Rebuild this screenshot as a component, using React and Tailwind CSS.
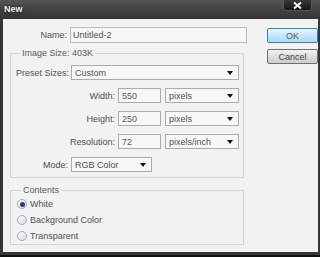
import React from "react";

const font = { fontFamily: '"Liberation Sans", Arial, sans-serif' };

function Arrow() {
  return (
    <svg width="6" height="4" viewBox="0 0 6 4" className="shrink-0">
      <path d="M0 0 H6 L3 4 Z" fill="#111" />
    </svg>
  );
}

function Select({ w, children }) {
  return (
    <div
      className={`${w} h-[15px] border border-[#ababab] bg-[#f7f7f7] flex items-center justify-between pl-[3px] pr-[5px] text-[#505050]`}
    >
      <span>{children}</span>
      <Arrow />
    </div>
  );
}

function Input({ w, children }) {
  return (
    <div
      className={`${w} h-[15px] border border-[#ababab] bg-[#f7f7f7] flex items-center pl-[3px] text-[#5a5a5a]`}
    >
      {children}
    </div>
  );
}

function Radio({ checked, label }) {
  return (
    <div className="h-[16px] flex items-center pl-[6px] gap-[2px] text-[#505050]">
      <div className="w-[10px] h-[10px] rounded-full border border-[#a3abb5] bg-gradient-to-br from-[#ffffff] to-[#d3dae2] flex items-center justify-center">
        {checked && <div className="w-[5px] h-[5px] rounded-full bg-[#2b3e74]" />}
      </div>
      <span className="ml-[1px]">{label}</span>
    </div>
  );
}

function UnitRow({ label, value, unit }) {
  return (
    <div className="flex items-center h-[15px]">
      <div className="w-[104px] text-right text-[#505050]">{label}</div>
      <div className="w-[3px]" />
      <Input w="w-[43px]">{value}</Input>
      <div className="w-[4px]" />
      <Select w="w-[74px]">{unit}</Select>
    </div>
  );
}

export default function App() {
  return (
    <div
      className="w-[320px] h-[257px] bg-[#0f1512] flex flex-col overflow-hidden text-[9px] leading-[12px]"
      style={font}
    >
      <div className="h-[19px] bg-gradient-to-b from-[#555555] via-[#424242] to-[#363636] flex items-start">
        <span className="ml-[4px] mt-[4px] font-bold text-[#f2f2f2] text-[9px] leading-[11px] [text-shadow:0_0_3px_#000]">
          New
        </span>
        <div className="ml-auto mr-[8px] w-[29px] h-[11px] bg-gradient-to-b from-[#3a3a3a] to-[#151515] border border-[#555] border-t-0 rounded-b-[3px] flex items-center justify-center">
          <svg width="9" height="7" viewBox="0 0 9 7">
            <path d="M1 0.5 L8 6.5 M8 0.5 L1 6.5" stroke="#f4f4f4" strokeWidth="2" />
          </svg>
        </div>
      </div>
      <div className="flex-1 bg-[#363636] px-[3px] flex">
        <div className="flex-1 bg-[#f2f2f2] flex flex-row">
          <div className="w-[244px] ml-[7px] flex flex-col">
            <div className="mt-[8px] flex items-center h-[16px]">
              <div className="w-[57px] text-right text-[#505050]">Name:</div>
              <div className="w-[3px]" />
              <div className="w-[177px] h-[16px] border border-[#bcbcbc] bg-[#f6f6f6] flex items-center pl-[2px] text-[#505050]">
                Untitled-2
              </div>
            </div>
            <fieldset className="mt-[4px] w-[234px] border border-[#d2d2d2] pb-[5px]">
              <legend className="ml-[9px] px-[2px] text-[#5a5a5a] leading-[12px]">Image Size: 403K</legend>
              <div className="flex flex-col gap-[8px] mt-[6px]">
                <div className="flex items-center h-[15px]">
                  <div className="w-[58px] text-right text-[#505050]">Preset Sizes:</div>
                  <div className="w-[2px]" />
                  <Select w="w-[168px]">Custom</Select>
                </div>
                <UnitRow label="Width:" value="550" unit="pixels" />
                <UnitRow label="Height:" value="250" unit="pixels" />
                <UnitRow label="Resolution:" value="72" unit="pixels/inch" />
                <div className="flex items-center h-[15px]">
                  <div className="w-[57px] text-right text-[#505050]">Mode:</div>
                  <div className="w-[3px]" />
                  <Select w="w-[81px]">RGB Color</Select>
                </div>
              </div>
            </fieldset>
            <fieldset className="mt-[6px] w-[234px] border border-[#d2d2d2]">
              <legend className="ml-[10px] px-[2px] text-[#5a5a5a] leading-[12px]">Contents</legend>
              <Radio checked label="White" />
              <Radio label="Background Color" />
              <Radio label="Transparent" />
            </fieldset>
          </div>
          <div className="ml-[13px] mt-[9px] flex flex-col gap-[6px]">
            <div className="w-[51px] h-[15px] rounded-[2px] border border-[#3c7fb1] bg-gradient-to-b from-[#eaf6fd] via-[#c4e7fb] to-[#a9d8f2] flex items-center justify-center text-[#555]">
              OK
            </div>
            <div className="w-[51px] h-[15px] rounded-[2px] border border-[#707070] bg-gradient-to-b from-[#f2f2f2] via-[#dedede] to-[#cdcdcd] flex items-center justify-center text-[#444]">
              Cancel
            </div>
          </div>
        </div>
      </div>
      <div className="h-[3px] bg-[#363636]" />
      <div className="h-[2px] bg-[#0c1411]" />
    </div>
  );
}
